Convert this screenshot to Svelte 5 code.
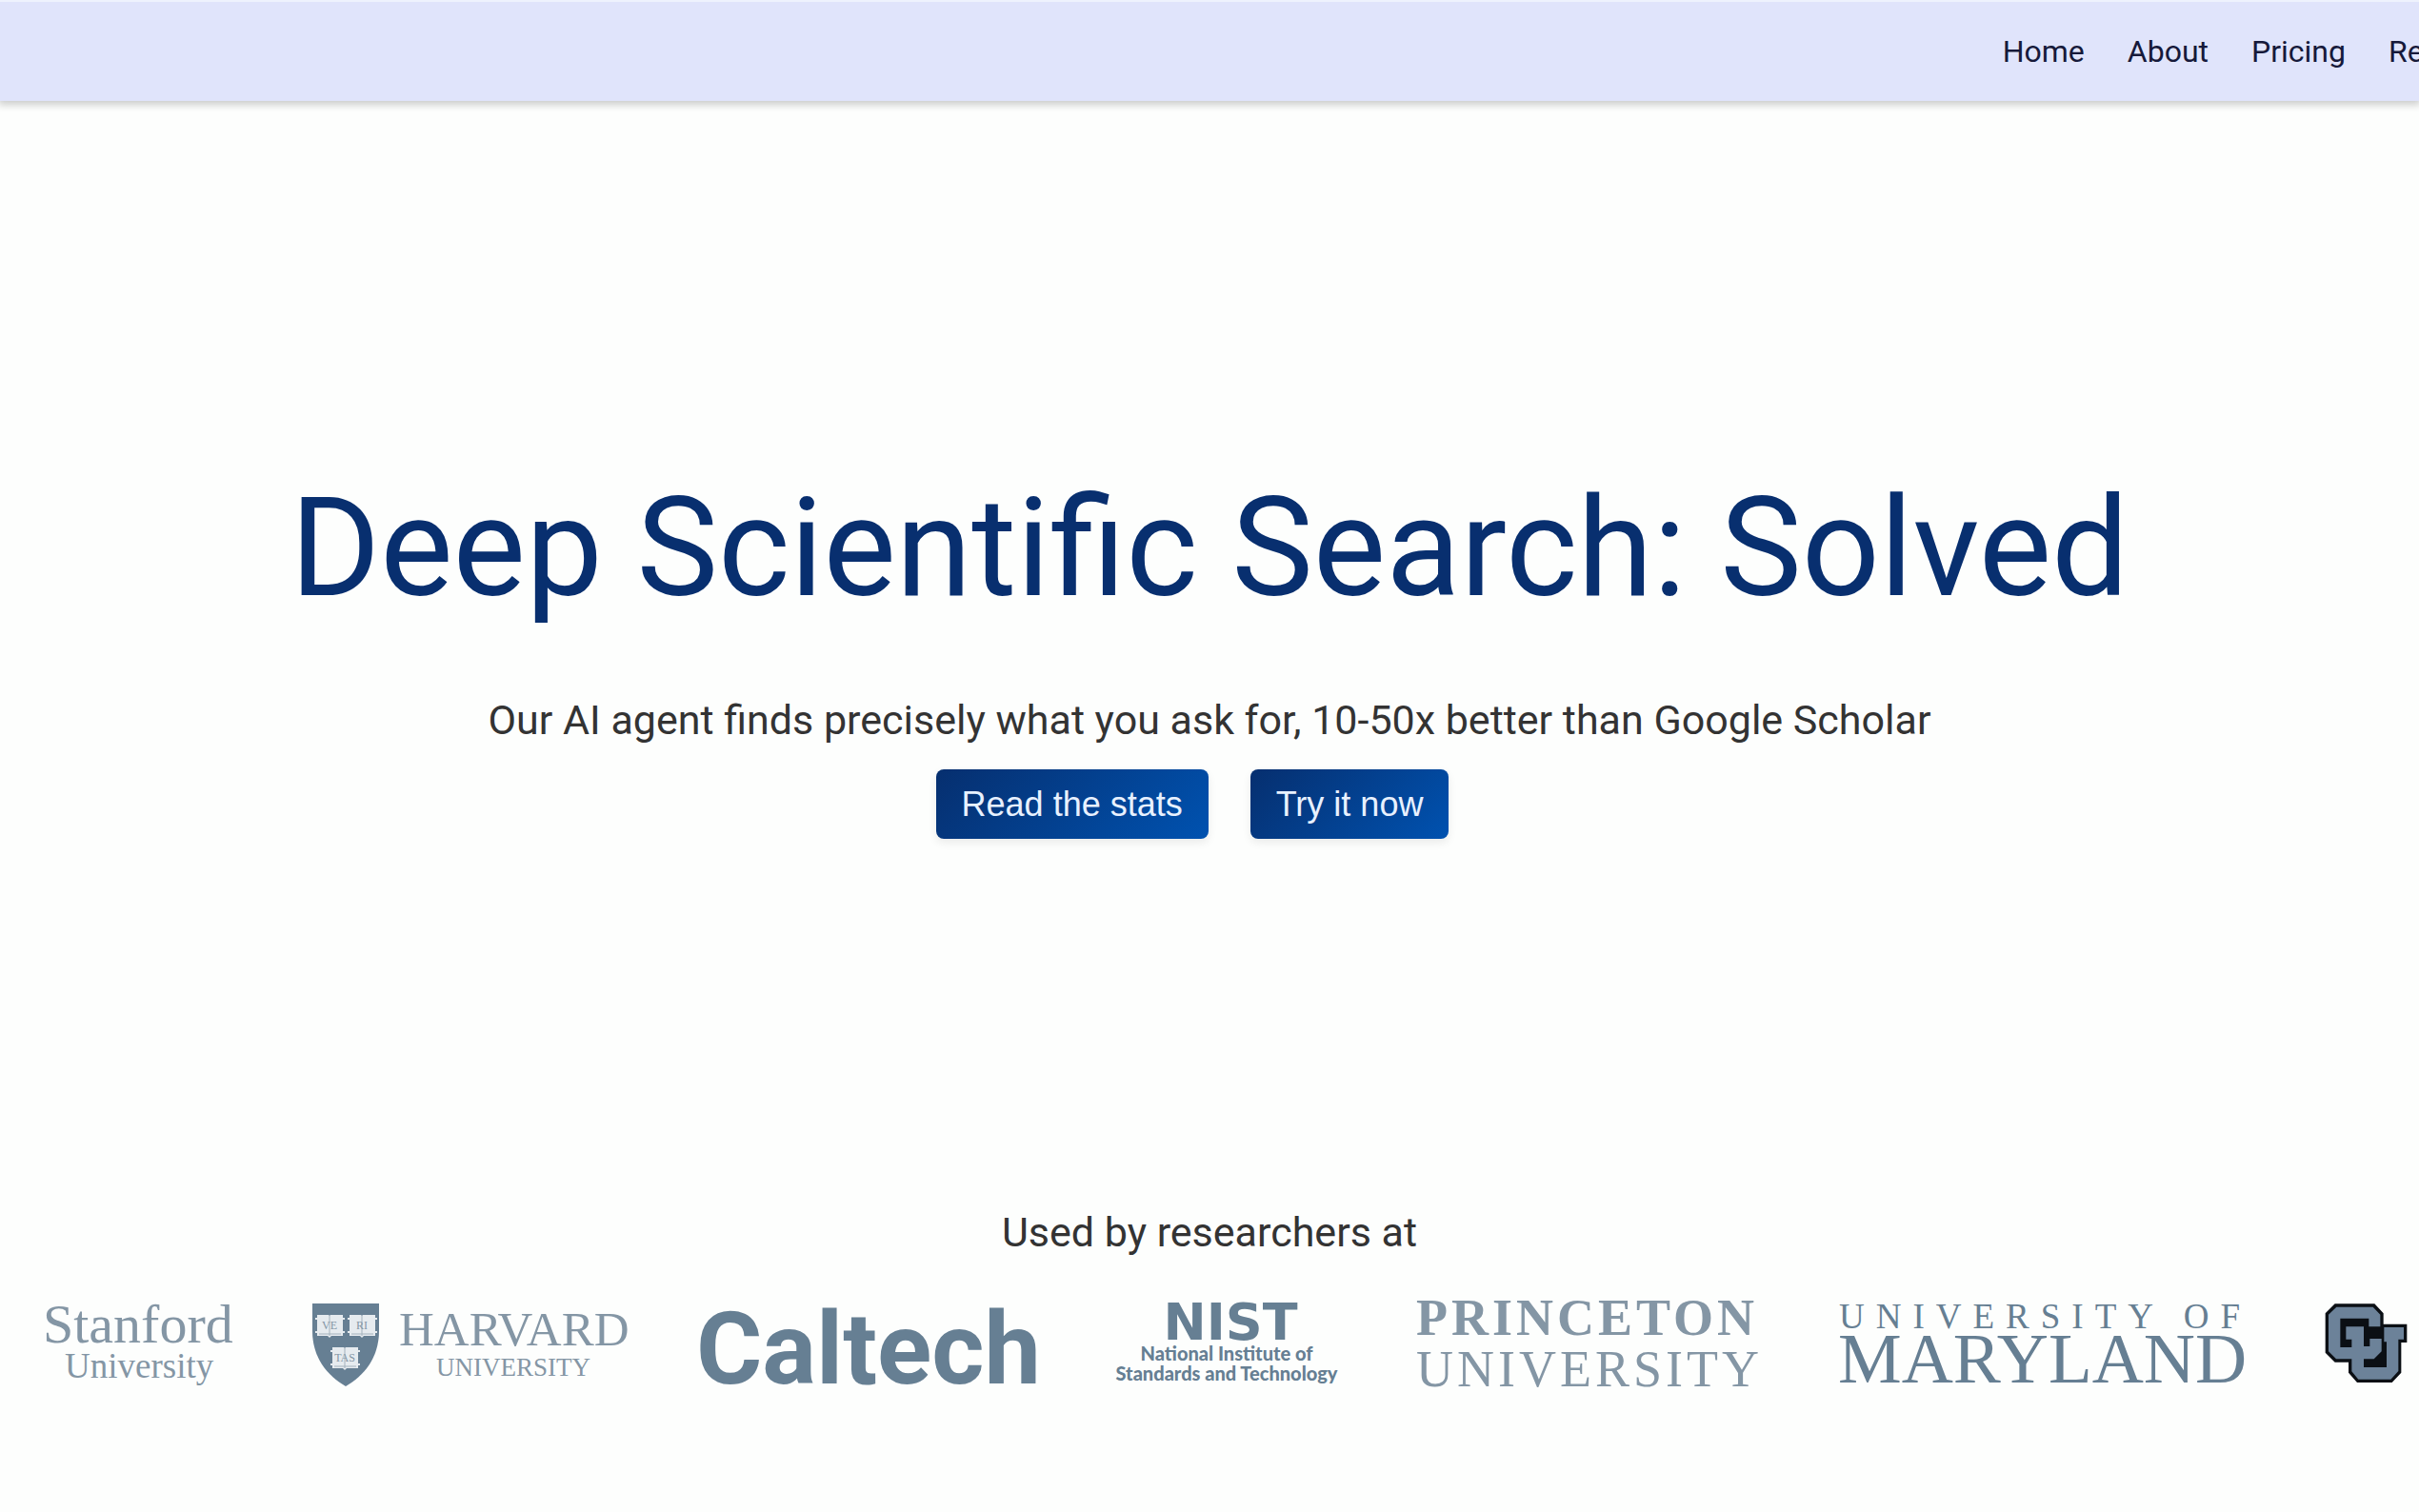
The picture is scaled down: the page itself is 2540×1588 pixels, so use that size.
<script>
    const links = ['Home', 'About', 'Pricing', 'Resources']

    const books = [
        { x: 5, y: 17, word: 'VE' },
        { x: 39, y: 17, word: 'RI' },
        { x: 21, y: 51, word: 'TAS' }
    ]
</script>

<style>
    :global(body){
        background-color: #fdfefd;
        font-family: Roboto, "Liberation Sans", sans-serif;
        color: #333;
        overflow-x: hidden;
    }
    .shadow{
        box-shadow: 0 2px 8px 2px rgba(0,0,0,.2);
    }
    .header{
        box-sizing: border-box;
        min-height: 106px;
        display: flex;
        align-items: center;
        justify-content: flex-end;
        overflow: hidden;
        border-top: 2px solid #eef2fd;
        background-color: #e0e4fb;
    }
    .menu{
        display: flex;
        gap: 45px;
        margin: 0;
        padding: 0;
        list-style: none;
    }
    .menu li:last-child{
        width: 32px;
    }
    .menu a{
        font-size: 32px;
        line-height: 40px;
        color: #16193a;
        text-decoration: none;
        white-space: nowrap;
    }
    .hero{
        padding-top: 382px;
        text-align: center;
    }
    h1{
        margin: 0 0 66px;
        font-size: 144px;
        line-height: 176px;
        font-weight: 400;
        color: #082f6f;
    }
    .lead{
        margin: 0;
        font-size: 43px;
        line-height: 52px;
    }
    .actions{
        display: flex;
        justify-content: center;
        gap: 8px;
        margin-top: 26px;
    }
    .btn{
        margin: 0 36px 0 0;
        padding: 16px 27px;
        border: 0;
        border-radius: 8px;
        background: linear-gradient(135deg, #062f6f, #0052b0);
        box-shadow: 0 4px 10px rgba(0,0,0,.08);
        color: #e8f1ff;
        font-family: "Liberation Sans", Arial, sans-serif;
        font-size: 36px;
        line-height: 41px;
        cursor: pointer;
    }
    .used{
        padding-top: 387px;
        text-align: center;
    }
    .strip{
        display: flex;
        gap: 80px;
        margin-top: 32px;
        padding-left: 45px;
    }
    .logo{
        flex: none;
        height: 120px;
        overflow: visible;
        fill: #667f93;
        font-family: "Liberation Serif", "Times New Roman", serif;
    }
    .pale{
        fill: #8496a5;
    }
    .size-27{ font-size: 27px; }
    .size-37{ font-size: 37px; }
    .size-51{ font-size: 51px; }
    .size-54{ font-size: 54px; }
    .size-58{ font-size: 58px; }
    .size-75{ font-size: 75px; }
    .bold{ font-weight: 700; }
    .open{ letter-spacing: 4px; }
    .wide{ letter-spacing: 12px; }
    .caltech{
        font-family: Roboto, sans-serif;
        font-size: 106px;
        font-weight: 700;
    }
    .nist{
        font-family: "DejaVu Sans", sans-serif;
        font-size: 54px;
        font-weight: 700;
    }
    .nist-name{
        font-family: Lato, sans-serif;
        font-size: 20px;
        font-weight: 900;
    }
    .book{
        fill: #e6ebef;
    }
    .motto{
        font-size: 12px;
    }
</style>

<div class="shadow">
    <header class="header">
        <nav aria-label="Main">
            <ul class="menu">
                {#each links as link}
                    <li><a href="#{link.toLowerCase()}">{link}</a></li>
                {/each}
            </ul>
        </nav>
    </header>
</div>

<main>
    <section class="hero">
        <h1>Deep Scientific Search: Solved</h1>
        <p class="lead">Our AI agent finds precisely what you ask for, 10-50x better than Google Scholar</p>
        <div class="actions">
            <button class="btn" type="button">Read the stats</button>
            <button class="btn" type="button">Try it now</button>
        </div>
    </section>

    <section class="used">
        <p class="lead">Used by researchers at</p>
        <div class="strip">
            <svg class="logo pale" width="203" viewBox="0 -12 203 120">
                <text class="size-58" x="0" y="46">Stanford</text>
                <text class="size-37" x="23" y="83">University</text>
            </svg>

            <svg class="logo" width="327" viewBox="0 -12 327 120">
                <path d="M0 5H70V34C70 62 54 81 35 92C16 81 0 62 0 34Z" />
                {#each books as book}
                    <g transform="translate({book.x} {book.y})">
                        <path class="book" d="M0 0H12L13 1L14 0H27V3H29V5H27V17H29V19H27V22H15L13 24L11 22H0V19H-2V17H0V5H-2V3H0Z" />
                        <path d="M13 1V22M2 20H25" stroke="#a4b2bd" />
                        <text class="motto pale" x="13" y="15" text-anchor="middle">{book.word}</text>
                    </g>
                {/each}
                <text class="size-51 pale" x="91" y="49">HARVARD</text>
                <text class="size-27 pale" x="130" y="81">UNIVERSITY</text>
            </svg>

            <svg class="logo" width="354" viewBox="0 -12 354 120">
                <text class="caltech" x="-4" y="89">Caltech</text>
            </svg>

            <svg class="logo" width="238" viewBox="0 -12 238 120">
                <text class="nist" x="123" y="43" text-anchor="middle">NIST</text>
                <text class="nist-name" x="119" y="65" text-anchor="middle">National Institute of</text>
                <text class="nist-name" x="119" y="86" text-anchor="middle">Standards and Technology</text>
            </svg>

            <svg class="logo pale" width="363" viewBox="0 -12 363 120">
                <text class="size-54 bold open" x="0" y="38">PRINCETON</text>
                <text class="size-54 open" x="0" y="92">UNIVERSITY</text>
            </svg>

            <svg class="logo" width="431" viewBox="0 -12 431 120">
                <text class="size-37 wide" x="1" y="31">UNIVERSITY OF</text>
                <text class="size-75" x="0" y="88">MARYLAND</text>
            </svg>

            <svg class="logo" width="88" viewBox="63 6 264 360" role="img" aria-label="CU">
                <path fill="#0b0f14" d="M95 58H220L248 88V122H322V180H304V275L275 306H165L138 275V242H95L65 212V88Z" />
                <path fill="#6c8299" d="M100 68H215L238 92V130H202V104H112V195H148V170H130V130H186V192H205V168H242V208L218 232H186V258H258V178H250V132H312V170H295V270L271 296H169L148 271V232H99L75 208V92Z" />
            </svg>
        </div>
    </section>
</main>
